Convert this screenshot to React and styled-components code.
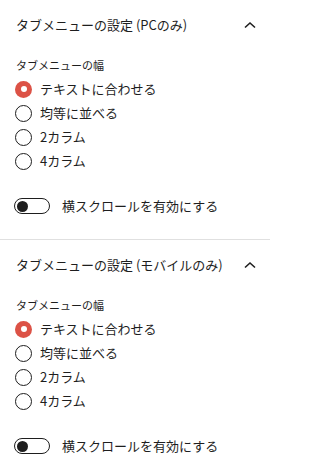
import React from "react";
import styled, { createGlobalStyle } from "styled-components";

const Global = createGlobalStyle`
  html, body { margin: 0; padding: 0; background: #fff; }
  body {
    font-family: "Noto Sans CJK JP", "Noto Sans", sans-serif;
    color: #1e1e1e;
    width: 270px;
    overflow: hidden;
  }
`;

const Panel = styled.section`
  border-bottom: 1px solid #e0e0e0;
  height: 239px;
`;

const Header = styled.div`
  height: 49px;
  display: flex;
  align-items: center;
  justify-content: space-between;
  padding: 0 8px 0 16px;
`;

const Title = styled.span`
  font-size: 13px;
  line-height: 20px;
  color: #1e1e1e;
`;

const Chevron = styled.svg`
  width: 24px;
  height: 24px;
  display: block;
`;

const Body = styled.div`
  padding: 8px 16px 0 16px;
  display: flex;
  flex-direction: column;
`;

const FieldLabel = styled.div`
  font-size: 11px;
  line-height: 16px;
  color: #1e1e1e;
  margin-bottom: 4px;
`;

const RadioList = styled.div`
  display: flex;
  flex-direction: column;
`;

const RadioRow = styled.label`
  height: 24px;
  display: flex;
  align-items: center;
  gap: 8px;
  margin-left: -1px;
  font-size: 13px;
  line-height: 20px;
`;

const RadioDot = styled.span`
  box-sizing: border-box;
  width: 17px;
  height: 17px;
  border-radius: 50%;
  flex: none;
  display: flex;
  align-items: center;
  justify-content: center;
  border: ${(p) => (p.$checked ? "none" : "1px solid #1e1e1e")};
  background: ${(p) => (p.$checked ? "#dc5246" : "#fff")};
  &::after {
    content: "";
    display: ${(p) => (p.$checked ? "block" : "none")};
    width: 6px;
    height: 6px;
    border-radius: 50%;
    background: #fff;
  }
`;

const ToggleRow = styled.label`
  margin-top: 23px;
  height: 20px;
  display: flex;
  align-items: center;
  gap: 12px;
  margin-left: -2px;
  font-size: 13px;
  line-height: 20px;
`;

const Track = styled.span`
  box-sizing: border-box;
  width: 36px;
  height: 16px;
  border: 1px solid #1e1e1e;
  border-radius: 8px;
  display: flex;
  align-items: center;
  padding-left: 2px;
  flex: none;
`;

const Knob = styled.span`
  width: 11px;
  height: 11px;
  border-radius: 50%;
  background: #1e1e1e;
`;

const options = ["テキストに合わせる", "均等に並べる", "2カラム", "4カラム"];

function SettingsPanel({ title }) {
  return (
    <Panel>
      <Header>
        <Title>{title}</Title>
        <Chevron viewBox="0 0 24 24" fill="none">
          <path d="M7 14.5 L12 10 L17 14.5" stroke="#1e1e1e" strokeWidth="1.6" />
        </Chevron>
      </Header>
      <Body>
        <FieldLabel>タブメニューの幅</FieldLabel>
        <RadioList>
          {options.map((o, i) => (
            <RadioRow key={o}>
              <RadioDot $checked={i === 0} />
              <span>{o}</span>
            </RadioRow>
          ))}
        </RadioList>
        <ToggleRow>
          <Track>
            <Knob />
          </Track>
          <span>横スクロールを有効にする</span>
        </ToggleRow>
      </Body>
    </Panel>
  );
}

export default function App() {
  return (
    <>
      <Global />
      <SettingsPanel title="タブメニューの設定 (PCのみ)" />
      <SettingsPanel title="タブメニューの設定 (モバイルのみ)" />
    </>
  );
}
